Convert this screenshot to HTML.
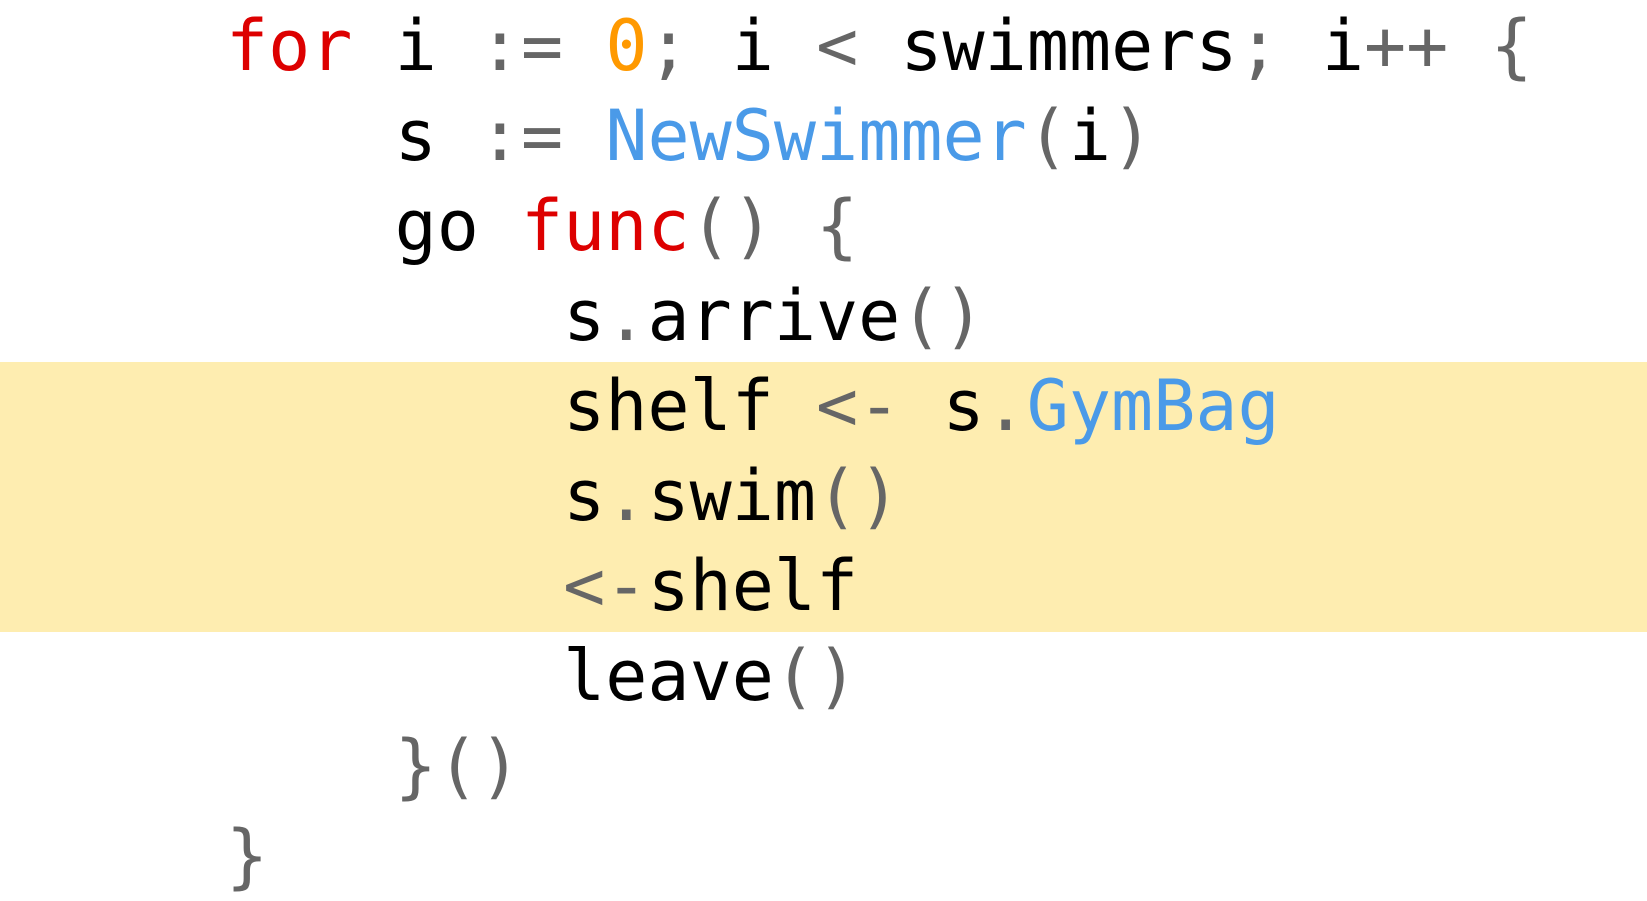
<!DOCTYPE html>
<html><head><meta charset="utf-8"><style>
html,body{margin:0;padding:0;background:#fff;width:1647px;height:900px;overflow:hidden}
.hl{position:absolute;left:0;top:362px;width:1647px;height:270px;background:#feedb0}
pre{position:absolute;left:226px;top:1px;margin:0;font-family:"DejaVu Sans Mono","Liberation Mono",monospace;font-size:70px;line-height:90px;color:#000}
.k{color:#dd0000}.p{color:#666}.n{color:#ff9900}.b{color:#4a9ae8}
</style></head><body>
<div class="hl"></div>
<pre><span class="k">for</span> i <span class="p">:=</span> <span class="n">0</span><span class="p">;</span> i <span class="p">&lt;</span> swimmers<span class="p">;</span> i<span class="p">++</span> <span class="p">{</span>
    s <span class="p">:=</span> <span class="b">NewSwimmer</span><span class="p">(</span>i<span class="p">)</span>
    go <span class="k">func</span><span class="p">()</span> <span class="p">{</span>
        s<span class="p">.</span>arrive<span class="p">()</span>
        shelf <span class="p">&lt;-</span> s<span class="p">.</span><span class="b">GymBag</span>
        s<span class="p">.</span>swim<span class="p">()</span>
        <span class="p">&lt;-</span>shelf
        leave<span class="p">()</span>
    <span class="p">}()</span>
<span class="p">}</span></pre>
</body></html>
